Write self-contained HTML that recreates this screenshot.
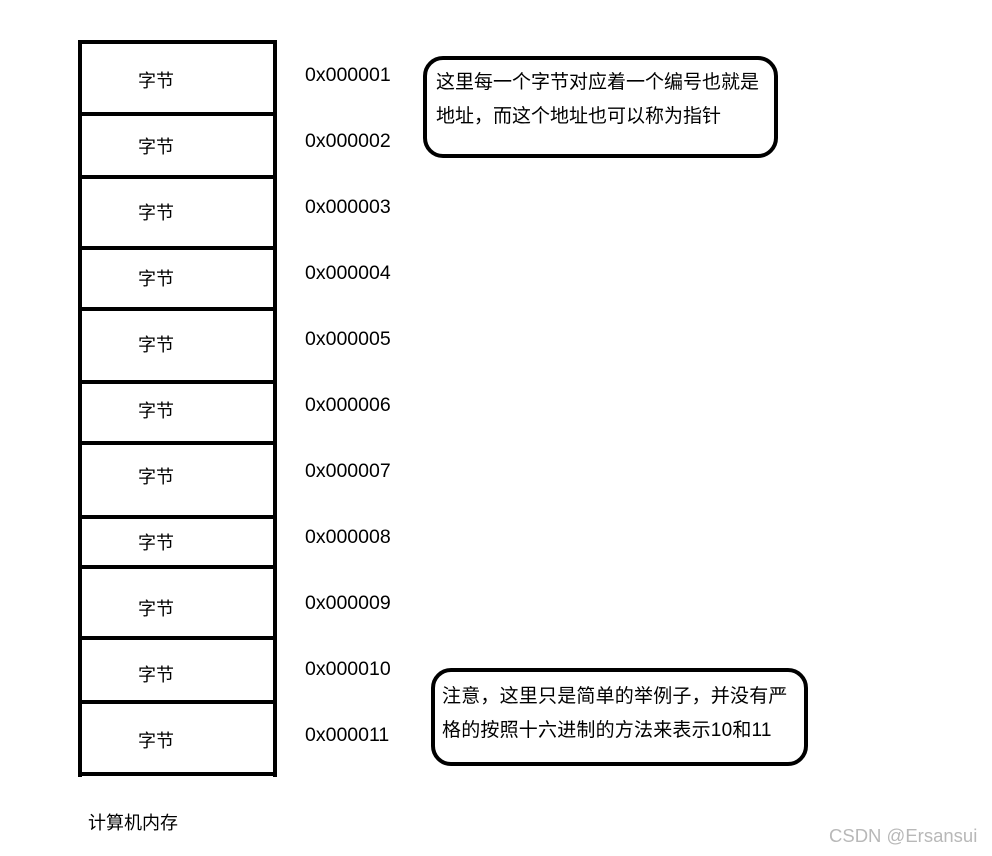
<!DOCTYPE html>
<html><head><meta charset="utf-8"><style>
body{margin:0;width:992px;height:856px;background:#fff;position:relative;overflow:hidden;font-family:"Liberation Sans","Noto Sans CJK SC",sans-serif;color:#000}
.a{position:absolute}
.h{position:absolute;left:78px;width:199px;height:4px;background:#000}
.v{position:absolute;width:4px;background:#000}
.t{position:absolute;left:138px;font-size:18px;line-height:20px}
.n{position:absolute;left:305px;font-size:19.5px;line-height:20px}
.box{position:absolute;border:4px solid #000;border-radius:20px;box-sizing:border-box}
.bt{position:absolute;font-size:19px;line-height:34px;white-space:nowrap}
</style></head><body>
<div class="v" style="left:78px;top:40px;height:737px"></div>
<div class="v" style="left:273px;top:40px;height:737px"></div>
<div class="h" style="top:40px"></div>
<div class="h" style="top:112px"></div>
<div class="h" style="top:175px"></div>
<div class="h" style="top:246px"></div>
<div class="h" style="top:307px"></div>
<div class="h" style="top:380px"></div>
<div class="h" style="top:441px"></div>
<div class="h" style="top:515px"></div>
<div class="h" style="top:565px"></div>
<div class="h" style="top:636px"></div>
<div class="h" style="top:700px"></div>
<div class="h" style="top:772px"></div>

<div class="t" style="top:71px">字节</div>
<div class="t" style="top:137px">字节</div>
<div class="t" style="top:203px">字节</div>
<div class="t" style="top:269px">字节</div>
<div class="t" style="top:335px">字节</div>
<div class="t" style="top:401px">字节</div>
<div class="t" style="top:467px">字节</div>
<div class="t" style="top:533px">字节</div>
<div class="t" style="top:599px">字节</div>
<div class="t" style="top:665px">字节</div>
<div class="t" style="top:731px">字节</div>

<div class="n" style="top:65px">0x000001</div>
<div class="n" style="top:131px">0x000002</div>
<div class="n" style="top:197px">0x000003</div>
<div class="n" style="top:263px">0x000004</div>
<div class="n" style="top:329px">0x000005</div>
<div class="n" style="top:395px">0x000006</div>
<div class="n" style="top:461px">0x000007</div>
<div class="n" style="top:527px">0x000008</div>
<div class="n" style="top:593px">0x000009</div>
<div class="n" style="top:659px">0x000010</div>
<div class="n" style="top:725px">0x000011</div>

<div class="a" style="left:88px;top:812px;font-size:18px;line-height:22px">计算机内存</div>

<div class="box" style="left:423px;top:56px;width:355px;height:102px"></div>
<div class="bt" style="left:436px;top:66px">这里每一个字节对应着一个编号也就是<br>地址，而这个地址也可以称为指针</div>

<div class="box" style="left:431px;top:668px;width:377px;height:98px"></div>
<div class="bt" style="left:442px;top:680px;letter-spacing:0.2px">注意，这里只是简单的举例子，并没有严<br>格的按照十六进制的方法来表示10和11</div>

<div class="a" style="left:829px;top:825px;font-size:18.5px;color:#b8b8b8">CSDN @Ersansui</div>
</body></html>
